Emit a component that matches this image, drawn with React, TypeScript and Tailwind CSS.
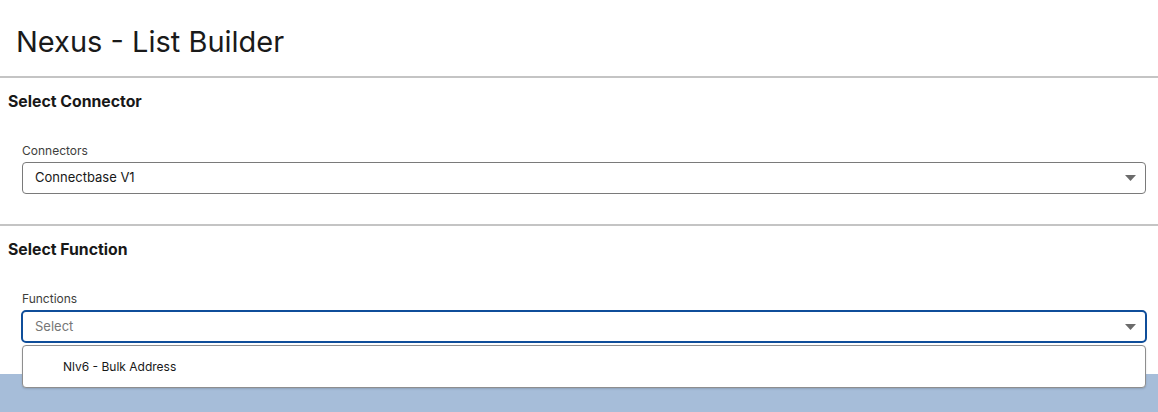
import React from 'react';

function Caret() {
  return (
    <svg width="11" height="6" viewBox="0 0 11 6" className="shrink-0">
      <path d="M0 0 H11 L5.5 6 Z" fill="#6b6b6b" />
    </svg>
  );
}

export default function App() {
  return (
    <div className="min-h-[412px] bg-white text-[#181818] font-['Inter',_'Liberation_Sans',_sans-serif] flex flex-col">
      {/* Title */}
      <div className="h-[76px] px-4 flex items-center">
        <h1 className="text-[29px] font-normal leading-none pt-[6px] text-[#1a1a1a]">Nexus - List Builder</h1>
      </div>
      <div className="h-[2px] bg-[#c4c4c4]" />

      {/* Connector */}
      <section className="pl-2 pr-1 pt-[14px] pb-[30px]">
        <h2 className="text-[15.8px] font-bold leading-[20px]">Select Connector</h2>
        <div className="mt-[30px] pl-[14px] pr-[8px]">
          <label className="block text-[12px] leading-[18px] text-[#3e3e3c] mb-[2px]">Connectors</label>
          <div className="h-[32px] border border-[#7a7a7a] rounded-[4px] flex items-center justify-between pl-[12px] pr-[9px]">
            <span className="text-[13px] text-[#181818]">Connectbase V1</span>
            <Caret />
          </div>
        </div>
      </section>
      <div className="h-[2px] bg-[#c4c4c4]" />

      {/* Function */}
      <section className="pl-2 pr-1 pt-[14px] pb-[31px]">
        <h2 className="text-[15.8px] font-bold leading-[20px]">Select Function</h2>
        <div className="mt-[30px] pl-[14px] pr-[8px]">
          <label className="block text-[12px] leading-[18px] text-[#3e3e3c] mb-[2px]">Functions</label>
          <div className="relative">
            <div className="h-[33px] -mx-[1px] border-2 border-[#0f4e9a] rounded-[5px] flex items-center justify-between pl-[12px] pr-[9px]">
              <span className="text-[13px] text-[#767676]">Select</span>
              <Caret />
            </div>
            <div className="absolute left-0 right-0 top-[35px] h-[43px] bg-white border border-[#8e8e8e] rounded-[4px] shadow-[0_1px_2px_rgba(0,0,0,0.15)] flex items-center pl-[40px] z-10">
              <span className="text-[12px] text-[#181818]">Nlv6 - Bulk Address</span>
            </div>
          </div>
        </div>
      </section>

      {/* Footer band */}
      <div className="flex-1 bg-[#a6bdd9]" />
    </div>
  );
}
